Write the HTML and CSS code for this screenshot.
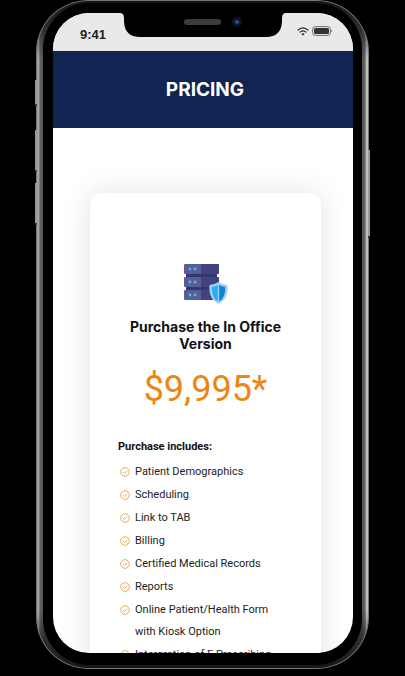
FILE: index.html
```
<!DOCTYPE html>
<html lang="en">
<head>
<meta charset="UTF-8">
<meta name="viewport" content="width=device-width, initial-scale=1.0">
<title>Pricing</title>
<link rel="stylesheet" href="styles.css">
</head>
<body>
<div class="phone">
	<span class="side-button mute"></span>
	<span class="side-button volume-up"></span>
	<span class="side-button volume-down"></span>
	<span class="side-button power"></span>
	<div class="bezel">
		<div class="screen">
			<div class="status-bar">
				<span class="time">9:41</span>
				<div class="status-icons">
					<svg class="wifi" viewBox="0 0 12 9" fill="none" stroke="#222" stroke-width="1.3">
						<path d="M0.7 3.4Q6 -1.6 11.3 3.4"/>
						<path d="M2.7 5.4Q6 2.3 9.3 5.4"/>
						<path d="M4.4 6.9Q6 5.5 7.6 6.9L6 8.6Z" fill="#222" stroke="none"/>
					</svg>
					<svg class="battery" viewBox="0 0 21 10">
						<rect x="0.5" y="0.5" width="18" height="9" rx="3" fill="#ddd" stroke="#777"/>
						<rect x="2" y="2" width="15" height="6" rx="1.5" fill="#333"/>
						<path d="M19.5 3.5Q21 5 19.5 6.5Z" fill="#333"/>
					</svg>
				</div>
			</div>
			<header class="page-header">
				<h1>PRICING</h1>
			</header>
			<main>
				<section class="card">
					<svg class="server" viewBox="0 0 44 40">
						<path d="M2 7h31v22H2z" fill="#34366f"/>
						<rect x="0" y="0" width="35" height="10" rx="1" fill="#5b5d96"/>
						<rect x="0" y="13" width="35" height="10" rx="1" fill="#5b5d96"/>
						<rect x="0" y="26" width="35" height="10" rx="1" fill="#5b5d96"/>
						<path d="M17 0h17q1 0 1 1v8q0 1-1 1H17zM17 13h17q1 0 1 1v8q0 1-1 1H17zM17 26h18v10H17z" fill="#41437f"/>
						<g fill="#3cc3e8">
							<circle cx="6" cy="5" r="1.4"/><circle cx="11" cy="5" r="1.4"/>
							<circle cx="6" cy="18" r="1.4"/><circle cx="11" cy="18" r="1.4"/>
							<circle cx="6" cy="31" r="1.4"/><circle cx="11" cy="31" r="1.4"/>
						</g>
						<path d="M34.5 18Q38 20.5 43.5 21Q45 35 34.5 40Q24 35 25.5 21Q31 20.5 34.5 18Z" fill="#a9cdf0"/>
						<path d="M33.8 21V37.5Q27.5 34 27.8 23Q31 22.6 33.8 21Z" fill="#20b4ee"/>
						<path d="M35.2 21V37.5Q41.5 34 41.2 23Q38 22.6 35.2 21Z" fill="#0786d8"/>
					</svg>
					<h2>Purchase the In Office Version</h2>
					<p class="price">$9,995*</p>
					<h3>Purchase includes:</h3>
					<ul class="features">
						<li>Patient Demographics</li>
						<li>Scheduling</li>
						<li>Link to TAB</li>
						<li>Billing</li>
						<li>Certified Medical Records</li>
						<li>Reports</li>
						<li>Online Patient/Health Form with Kiosk Option</li>
						<li>Intergration of E Prescribing</li>
					</ul>
				</section>
			</main>
			<div class="notch">
				<svg class="notch-shape" viewBox="0 0 166 25" preserveAspectRatio="none">
					<path d="M0 0Q4 0 4 5V9Q5 24 20 24H146Q161 24 162 9V5Q162 0 166 0Z" fill="#000"/>
				</svg>
				<span class="speaker"></span>
				<span class="camera"></span>
			</div>
		</div>
	</div>
</div>
<script>
// put the round tick in front of every feature
document.querySelectorAll(".features li").forEach(li=>{
	li.insertAdjacentHTML("afterbegin", `<svg class="tick" viewBox="0 0 10 10" fill="none" stroke="#f0a040" stroke-width="0.9"><circle cx="5" cy="5" r="4.3"/><path d="M3 5l1.5 1.5L7.2 3.7"/></svg>`);
});
</script>
</body>
</html>
```
FILE: styles.css
```
:root {
	--navy: #112452;
	--orange: #ee8512;
}
* {
	box-sizing: border-box;
}
body {
	margin: 0;
	padding: 0 36px 7px;
	height: 100vh;
	display: flex;
	background: #000;
	font-family: Roboto, sans-serif;
	color: #222;
	overflow: hidden;
}
h1, h2, h3, p, ul {
	margin: 0;
	padding: 0;
}

/* device */
.phone {
	position: relative;
	flex: 1;
	display: flex;
	padding: 3px 7px 4px;
	border-radius: 52px;
	background:
		linear-gradient(to bottom, #151515 0, #1510 60px, #1510 calc(100% - 60px), #151515 100%),
		linear-gradient(to right, #444 0, #bbb 2px, #666 4px, #4a4a4a 8px, #4a4a4a calc(100% - 8px), #666 calc(100% - 4px), #ddd calc(100% - 2px), #666 100%);
	box-shadow: inset 0 0 0 1px #777;
}
.bezel {
	flex: 1;
	min-width: 0;
	display: flex;
	padding: 10px 9px 12px 10px;
	border-radius: 46px;
	background: #000;
}
.side-button {
	position: absolute;
	left: -1px;
	width: 2px;
	background: #999;
	border-bottom: 2px solid #333;
}
.mute {
	top: 80px;
	height: 26px;
}
.volume-up {
	top: 130px;
	height: 42px;
}
.volume-down {
	top: 183px;
	height: 42px;
}
.power {
	left: auto;
	right: -1px;
	top: 150px;
	height: 88px;
}

.screen {
	position: relative;
	flex: 1;
	min-width: 0;
	border-radius: 36px;
	background: #fff;
	overflow: hidden;
}
.notch {
	position: absolute;
	top: 0;
	left: 50%;
	width: 166px;
	height: 25px;
	margin-left: -83px;
}
.notch-shape {
	display: block;
	width: 100%;
	height: 100%;
}
.speaker {
	position: absolute;
	top: 6px;
	left: 64px;
	width: 37px;
	height: 6px;
	border-radius: 3px;
	background: #3c3c3c;
}
.camera {
	position: absolute;
	top: 4px;
	left: 112px;
	width: 10px;
	height: 10px;
	border-radius: 50%;
	background: radial-gradient(circle, #3d6ad0 0, #152b66 2px, #10121c 3px, #10121c 5px);
}

/* status bar */
.status-bar {
	height: 38px;
	padding: 4px 20px 0 27px;
	display: flex;
	justify-content: space-between;
	align-items: center;
	background: #e9e9e9;
}
.time {
	font: bold 13px "Liberation Sans", sans-serif;
}
.status-icons {
	display: flex;
	align-items: center;
	gap: 3px;
	padding-bottom: 6px;
}
.wifi {
	width: 12px;
	height: 9px;
}
.battery {
	width: 21px;
	height: 10px;
}

.page-header {
	height: 77px;
	padding-left: 4px;
	display: flex;
	justify-content: center;
	align-items: center;
	background: var(--navy);
}
.page-header h1 {
	font: bold 19px Inter, sans-serif;
	color: #fff;
}

main {
	padding: 65px 32px 0 37px;
}
.card {
	padding: 71px 28px 28px;
	border-radius: 12px;
	background: #fff;
	box-shadow: 0 0 30px rgba(0, 0, 0, 0.12);
}
.server {
	display: block;
	width: 44px;
	height: 40px;
	margin: 0 auto;
}
.card h2 {
	margin-top: 14px;
	font: bold 14px/17px Inter, sans-serif;
	text-align: center;
	color: #111;
}
.price {
	margin-top: 15px;
	font-size: 36px;
	line-height: 44px;
	text-align: center;
	color: var(--orange);
}
.card h3 {
	margin-top: 25px;
	font-size: 11px;
	line-height: 22px;
	color: #111;
}
.features {
	margin-top: 3px;
	padding-right: 16px;
	display: grid;
	gap: 1px;
	list-style: none;
	font-size: 11px;
	line-height: 22px;
}
.features li {
	position: relative;
	padding-left: 17px;
}
.tick {
	position: absolute;
	left: 2px;
	top: 6px;
	width: 10px;
	height: 10px;
}
```
